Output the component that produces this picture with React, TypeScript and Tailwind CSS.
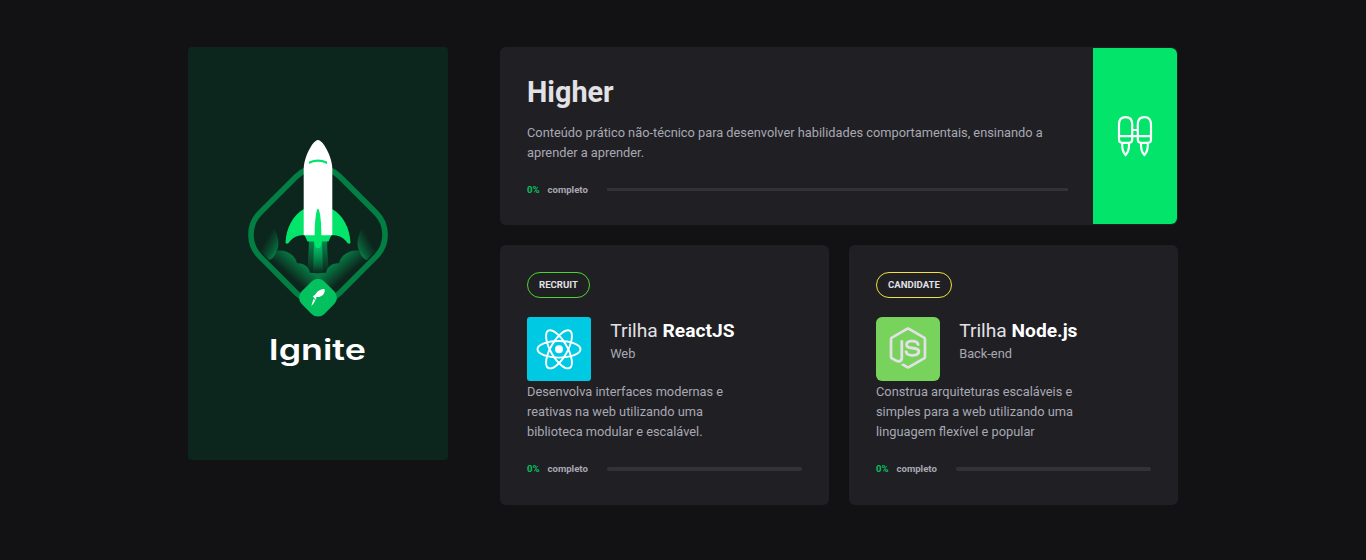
import React from "react";
import { FaNodeJs } from "react-icons/fa";

const wispPath = "M27 92C36 97 41.500 112 36.700 120.800C35 126 32 130 29 130L18 118V100Z";
const cloudPath =
  "M36.700 120.800C45 119 55 124 57 133.300C63 132.500 69 136.500 70 142.700Q74 143 78 143.300V160H60L24 126Q32 127 36.700 120.800Z";

function RocketEmblem() {
  return (
    <svg className="h-[200px] w-[156px]" viewBox="0 0 156 200" fill="none">
      <defs>
        <linearGradient id="wisp" gradientUnits="userSpaceOnUse" x1="39.500" y1="116" x2="27" y2="109">
          <stop offset="0" stopColor="#04a157" stopOpacity="0.6" />
          <stop offset="0.5" stopColor="#04a157" stopOpacity="0.28" />
          <stop offset="1" stopColor="#04a157" stopOpacity="0" />
        </linearGradient>
        <linearGradient id="cloud" gradientUnits="userSpaceOnUse" x1="53" y1="125" x2="41" y2="138.500">
          <stop offset="0" stopColor="#04a157" stopOpacity="0.68" />
          <stop offset="0.5" stopColor="#04a157" stopOpacity="0.35" />
          <stop offset="1" stopColor="#04a157" stopOpacity="0" />
        </linearGradient>
        <linearGradient id="flame" x1="0" y1="0" x2="0" y2="1">
          <stop offset="0" stopColor="#00c868" />
          <stop offset="1" stopColor="#00c868" stopOpacity="0" />
        </linearGradient>
        <linearGradient id="sideFlame" x1="0" y1="0" x2="0" y2="1">
          <stop offset="0" stopColor="#04874b" />
          <stop offset="1" stopColor="#04874b" stopOpacity="0" />
        </linearGradient>
      </defs>
      <g>
        <path d={wispPath} fill="url(#wisp)" />
        <path d={cloudPath} fill="url(#cloud)" />
      </g>
      <g transform="matrix(-1 0 0 1 156 0)">
        <path d={wispPath} fill="url(#wisp)" />
        <path d={cloudPath} fill="url(#cloud)" />
      </g>
      <rect x="21.500" y="48.200" width="113" height="113" rx="31" transform="rotate(45 78 104.700)" stroke="#027f42" strokeWidth="5.600" />
      <path d="M69 111H87L88.500 143H67.500Z" fill="url(#sideFlame)" />
      <path d="M74 111H82L83 143H73Z" fill="url(#flame)" />
      <path d="M64 79C53 85 46 98 45.500 113Q48 115 50 111Q55 105 64 105ZM92 79C103 85 110 98 110.500 113Q108 115 106 111Q101 105 92 105Z" fill="#02e46a" />
      <path d="M64 104H92L88.500 111.500H82L80.500 117Q78 119.500 75.500 117L74 111.500H67.500Z" fill="#02e46a" />
      <path d="M78 10C73 10 63.700 27 63.700 39V105.300H92.300V39C92.300 27 83 10 78 10Z" fill="#fff" />
      <path d="M69 31.500Q78 27.500 87 31.500V34Q78 29.500 69 34Z" fill="#02e46a" />
      <path d="M78 78.500C80.500 80 82 99 81 112H75C74 99 75.500 80 78 78.500Z" fill="#02e46a" />
      <rect x="62" y="151.700" width="32" height="32" rx="9" transform="rotate(45 78 167.700)" fill="#04c160" />
      <path d="M84.500 159Q85.500 162 83 165L79.500 167L75.500 166.800L74.500 165.500L77.500 161.500Q81 158.500 84.500 159ZM72.800 166.300L74.300 165.300L76.500 167.500L76 169.500L74.300 168.300ZM73.500 169L75.500 170L73.500 173.500L71.300 176Z" fill="#fff" />
    </svg>
  );
}

function Jetpack() {
  return (
    <svg className="h-[56px] w-[52px]" viewBox="0 0 52 56" fill="none" stroke="#fff" strokeWidth="2.200">
      <path d="M10 31.500V16.500Q10 9.200 16.600 9.200T23.200 16.500V31.500Q23.200 34.800 20 34.800H13.200Q10 34.800 10 31.500ZM28.800 31.500V16.500Q28.800 9.200 35.400 9.200T42 16.500V31.500Q42 34.800 38.800 34.800H32Q28.800 34.800 28.800 31.500Z" />
      <path d="M10 28.200H42M23 22H29" />
      <path d="M13.200 35.500Q12.800 43 16.600 47Q20.400 43 20 35.500M32 35.500Q31.600 43 35.400 47Q39.200 43 38.800 35.500" />
    </svg>
  );
}

function ReactLogo() {
  return (
    <svg className="size-16" viewBox="0 0 64 64" fill="none" stroke="#fff" strokeWidth="1.900">
      <circle cx="32" cy="32.300" r="4" fill="#fff" stroke="none" />
      <ellipse cx="32" cy="32.300" rx="21.500" ry="8.300" />
      <ellipse cx="32" cy="32.300" rx="21.500" ry="8.300" transform="rotate(60 32 32.300)" />
      <ellipse cx="32" cy="32.300" rx="21.500" ry="8.300" transform="rotate(120 32 32.300)" />
    </svg>
  );
}

function Progress({ bar }: { bar: string }) {
  return (
    <div className="flex h-3 items-center text-[9.6px] font-bold leading-3">
      <span className="w-[20.500px] text-[#04c160]">0%</span>
      <span className="w-[59.500px] text-[#a8a8b3]">completo</span>
      <div className={`flex-1 bg-[#323238] ${bar}`} />
    </div>
  );
}

type TrackProps = {
  badge: string;
  badgeClass: string;
  name: string;
  area: string;
  lines: string[];
  tile: React.ReactNode;
};

function TrackCard({ badge, badgeClass, name, area, lines, tile }: TrackProps) {
  return (
    <article className="h-[260px] w-[329px] rounded-md bg-[#202024] px-[27px] pt-[27px]">
      <span className={`flex h-[26px] items-center justify-center rounded-full border text-[9.6px] font-bold text-[#e1e1e6] ${badgeClass}`}>
        {badge}
      </span>
      <div className="mt-[19px] flex gap-[19.200px]">
        {tile}
        <div className="pt-px">
          <h2 className="text-[19.2px] leading-[25px] text-[#e1e1e6]">
            Trilha <strong className="font-bold text-white">{name}</strong>
          </h2>
          <p className="text-[12.8px] leading-[21px] text-[#a8a8b3]">{area}</p>
        </div>
      </div>
      <p className="mb-[21px] mt-px text-[12.8px] leading-5 text-[#a8a8b3]">
        {lines.map((line) => (
          <span key={line} className="block">{line}</span>
        ))}
      </p>
      <Progress bar="h-1 rounded-xs" />
    </article>
  );
}

export default function App() {
  return (
    <main className="flex h-[560px] gap-[52px] bg-[#121214] pl-[188px] pt-[47px] font-[Roboto,sans-serif]">
      <aside className="flex h-[413px] w-[260px] flex-col items-center rounded-sm bg-[#0c261d] pt-[83px]">
        <RocketEmblem />
        <svg className="h-[46px] w-[110px]" viewBox="0 0 110 46">
          <text x="5.800" y="30" textLength="97" lengthAdjust="spacingAndGlyphs" className="fill-white font-[Inter,sans-serif] text-[29px] font-semibold">
            Ignite
          </text>
        </svg>
      </aside>
      <div className="flex w-[678px] flex-col gap-5">
        <section className="flex h-[178px] rounded-md bg-[#202024] py-px pr-px">
          <div className="flex-1 pl-[27px] pr-[25px] pt-[24px]">
            <h1 className="text-[28.8px] font-bold leading-10 text-[#e1e1e6]">Higher</h1>
            <p className="mb-[20.500px] mt-[11px] text-[12.8px] leading-5 text-[#a8a8b3]">
              Conteúdo prático não-técnico para desenvolver habilidades comportamentais, ensinando a
              <br />
              aprender a aprender.
            </p>
            <Progress bar="h-[3px]" />
          </div>
          <div className="flex w-[84px] items-center justify-center rounded-r-md bg-[#02e46a]">
            <Jetpack />
          </div>
        </section>
        <div className="flex gap-5">
          <TrackCard
            badge="RECRUIT"
            badgeClass="w-[63px] border-[#4bd52f]"
            name="ReactJS"
            area="Web"
            lines={["Desenvolva interfaces modernas e", "reativas na web utilizando uma", "biblioteca modular e escalável."]}
            tile={<div className="size-16 rounded-[3px] bg-[#00cae3]"><ReactLogo /></div>}
          />
          <TrackCard
            badge="CANDIDATE"
            badgeClass="w-[76px] border-[#f0e13c]"
            name="Node.js"
            area="Back-end"
            lines={["Construa arquiteturas escaláveis e", "simples para a web utilizando uma", "linguagem flexível e popular"]}
            tile={<div className="flex size-16 items-center justify-center rounded-md bg-[#78d35d] pb-[2px]"><FaNodeJs className="size-[42px] text-[#e1e1e6]" /></div>}
          />
        </div>
      </div>
    </main>
  );
}
